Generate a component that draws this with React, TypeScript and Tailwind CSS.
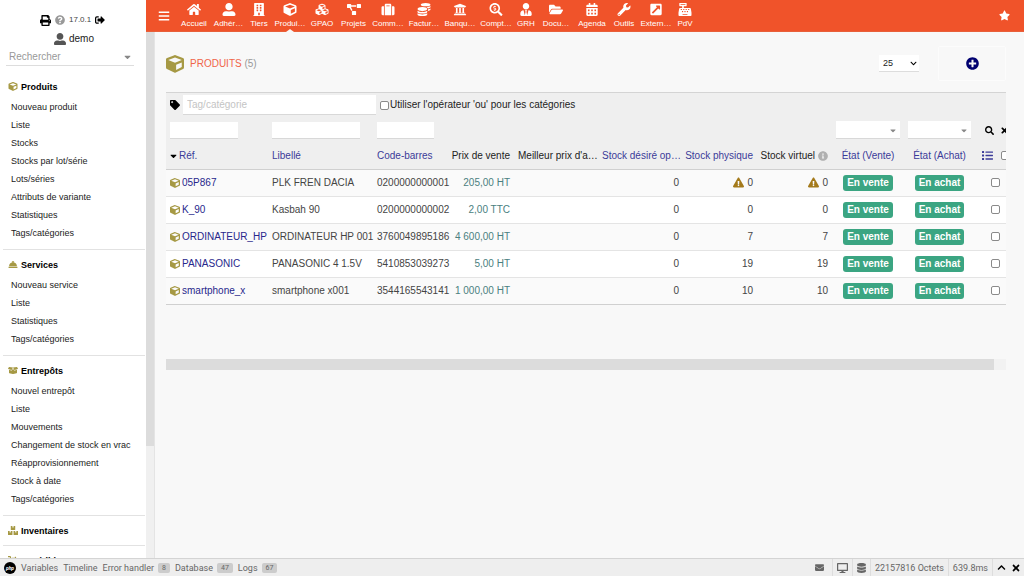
import React, { useState } from 'react';
import type { IconType } from 'react-icons';
import {
  FaBars,
  FaBoxes,
  FaBoxOpen,
  FaBuilding,
  FaCalendarAlt,
  FaCaretDown,
  FaCashRegister,
  FaChevronDown,
  FaChevronUp,
  FaCoins,
  FaConciergeBell,
  FaCube,
  FaCubes,
  FaDatabase,
  FaDesktop,
  FaDolly,
  FaEnvelope,
  FaExclamationTriangle,
  FaExternalLinkSquareAlt,
  FaFolderOpen,
  FaHome,
  FaInfoCircle,
  FaList,
  FaPlusCircle,
  FaPrint,
  FaProjectDiagram,
  FaQuestionCircle,
  FaSearch,
  FaSearchDollar,
  FaSignOutAlt,
  FaStar,
  FaSuitcase,
  FaTag,
  FaTimes,
  FaUniversity,
  FaUserAlt,
  FaUserTie,
  FaWrench,
} from 'react-icons/fa';

interface MenuEntry {
  label: string;
  icon: IconType;
  width: string;
  active?: boolean;
}

interface MenuSection {
  title: string;
  icon: IconType;
  items: string[];
}

interface Product {
  ref: string;
  label: string;
  barcode: string;
  price: string;
  desired: number;
  stock: number;
  warning?: boolean;
}

const topMenu: MenuEntry[] = [
  { label: 'Accueil', icon: FaHome, width: 'w-[36px]' },
  { label: 'Adhér…', icon: FaUserAlt, width: 'w-[33px]' },
  { label: 'Tiers', icon: FaBuilding, width: 'w-[28px]' },
  { label: 'Produi…', icon: FaCube, width: 'w-[34px]', active: true },
  { label: 'GPAO', icon: FaCubes, width: 'w-[30px]' },
  { label: 'Projets', icon: FaProjectDiagram, width: 'w-[33px]' },
  { label: 'Comm…', icon: FaSuitcase, width: 'w-[36px]' },
  { label: 'Factur…', icon: FaCoins, width: 'w-[36px]' },
  { label: 'Banqu…', icon: FaUniversity, width: 'w-[36px]' },
  { label: 'Compt…', icon: FaSearchDollar, width: 'w-[36px]' },
  { label: 'GRH', icon: FaUserTie, width: 'w-[24px]' },
  { label: 'Docu…', icon: FaFolderOpen, width: 'w-[36px]' },
  { label: 'Agenda', icon: FaCalendarAlt, width: 'w-[36px]' },
  { label: 'Outils', icon: FaWrench, width: 'w-[28px]' },
  { label: 'Extern…', icon: FaExternalLinkSquareAlt, width: 'w-[36px]' },
  { label: 'PdV', icon: FaCashRegister, width: 'w-[22px]' },
];

const sections: MenuSection[] = [
  {
    title: 'Produits',
    icon: FaCube,
    items: [
      'Nouveau produit',
      'Liste',
      'Stocks',
      'Stocks par lot/série',
      'Lots/séries',
      'Attributs de variante',
      'Statistiques',
      'Tags/catégories',
    ],
  },
  {
    title: 'Services',
    icon: FaConciergeBell,
    items: ['Nouveau service', 'Liste', 'Statistiques', 'Tags/catégories'],
  },
  {
    title: 'Entrepôts',
    icon: FaBoxOpen,
    items: [
      'Nouvel entrepôt',
      'Liste',
      'Mouvements',
      'Changement de stock en vrac',
      'Réapprovisionnement',
      'Stock à date',
      'Tags/catégories',
    ],
  },
  { title: 'Inventaires', icon: FaBoxes, items: [] },
  { title: 'Expéditions', icon: FaDolly, items: [] },
];

const products: Product[] = [
  { ref: '05P867', label: 'PLK FREN DACIA', barcode: '0200000000001', price: '205,00 HT', desired: 0, stock: 0, warning: true },
  { ref: 'K_90', label: 'Kasbah 90', barcode: '0200000000002', price: '2,00 TTC', desired: 0, stock: 0 },
  { ref: 'ORDINATEUR_HP', label: 'ORDINATEUR HP 001', barcode: '3760049895186', price: '4 600,00 HT', desired: 0, stock: 7 },
  { ref: 'PANASONIC', label: 'PANASONIC 4 1.5V', barcode: '5410853039273', price: '5,00 HT', desired: 0, stock: 19 },
  { ref: 'smartphone_x', label: 'smartphone x001', barcode: '3544165543141', price: '1 000,00 HT', desired: 0, stock: 10 },
];

const checkboxClass =
  'block h-[9px] w-[9px] shrink-0 appearance-none rounded-[2px] border border-[#8a8a8a] bg-white checked:bg-[#0075ff]';
const filterClass = 'block h-[17px] border-b border-[#d8d8d8] bg-white px-1 focus:outline-none';

const TopBar: React.FC = () => (
  <header className="flex h-8 shrink-0 items-stretch border-b border-[#e8603a] bg-[#f0532a] text-white">
    <button type="button" aria-label="Menu" className="flex w-[30px] items-center justify-center pl-[6px]">
      <FaBars className="h-3 w-3" />
    </button>
    <nav className="flex flex-1">
      {topMenu.map(({ label, icon: Icon, width, active }) => (
        <a
          key={label}
          href="#"
          className={`relative flex shrink-0 flex-col items-center gap-px pt-[3px] text-[8px] leading-[14px] whitespace-nowrap ${width}`}
        >
          <Icon className="h-[13px] w-[14px] shrink-0" />
          <span>{label}</span>
          {active && (
            <span className="absolute -bottom-px border-x-4 border-b-[3px] border-x-transparent border-b-[#f8f8f8]" />
          )}
        </a>
      ))}
    </nav>
    <button type="button" aria-label="Favoris" className="flex w-10 items-center justify-center">
      <FaStar className="h-[11px] w-[11px]" />
    </button>
  </header>
);

const Sidebar: React.FC = () => (
  <aside className="flex w-[155px] shrink-0 overflow-hidden border-r border-[#e4e4e4] bg-white">
    <div className="min-w-0 flex-1">
      <div className="flex h-[72px] flex-col pt-[11px]">
        <div className="flex h-[18px] items-center gap-1 pl-10 text-[8px] text-[#444]">
          <button type="button" aria-label="Imprimer"><FaPrint className="h-[11px] w-[11px] text-black" /></button>
          <button type="button" aria-label="Aide"><FaQuestionCircle className="h-[10px] w-[10px] text-[#999]" /></button>
          <span>17.0.1</span>
          <button type="button" aria-label="Déconnexion"><FaSignOutAlt className="h-[10px] w-[10px] text-black" /></button>
        </div>
        <a href="#" className="flex h-5 items-center gap-[3px] pl-[54px] text-[10px] text-[#222]">
          <FaUserAlt className="h-3 w-3 text-[#555]" />
          demo
        </a>
        <div className="relative mr-3 ml-[6px]">
          <select
            aria-label="Rechercher"
            className="h-[17px] w-full appearance-none border-b border-[#ddd] bg-transparent pb-px pl-[3px] text-[10px] text-[#999] focus:outline-none"
          >
            <option>Rechercher</option>
          </select>
          <FaCaretDown className="pointer-events-none absolute top-[3px] right-[3px] h-[10px] w-[7px] text-[#888]" />
        </div>
      </div>

      {sections.map(({ title, icon: Icon, items }) => (
        <section key={title} className="mr-px ml-[3px] border-b border-[#e2e2e2] pb-[3px]">
          <h2 className="flex h-[26px] items-center gap-[3px] pt-[3px] pl-[5px] text-[9px] font-bold text-black">
            <Icon className="h-[9px] w-[10px] text-[#a69944]" />
            {title}
          </h2>
          {items.length > 0 && (
            <ul className="pb-1 pl-2 text-[9px] leading-[18px] text-[#222]">
              {items.map((item) => (
                <li key={item}>
                  <a href="#">{item}</a>
                </li>
              ))}
            </ul>
          )}
        </section>
      ))}
    </div>
    {/* Scroll track */}
    <div className="w-2 bg-[#f0f0f0]">
      <div className="h-4/5 bg-[#dcdcdc]" />
    </div>
  </aside>
);

const StatusFilter: React.FC<{ label: string }> = ({ label }) => (
  <div className="relative">
    <select aria-label={label} className="block h-[18px] w-full appearance-none border-b border-[#d8d8d8] bg-white focus:outline-none">
      <option></option>
    </select>
    <FaCaretDown className="pointer-events-none absolute top-[5px] right-1 h-[9px] w-[6px] text-[#888]" />
  </div>
);

const StockValue: React.FC<{ product: Product }> = ({ product }) => (
  <span className="flex items-center justify-end gap-[3px]">
    {product.warning && <FaExclamationTriangle className="h-[11px] w-[11px] text-[#a47a1b]" />}
    {product.stock}
  </span>
);

const Badge: React.FC<{ children: React.ReactNode }> = ({ children }) => (
  <span className="inline-block h-4 rounded-[3px] bg-[#3ba582] px-1 align-middle text-[10px] leading-4 font-bold text-white">
    {children}
  </span>
);

const ProductTable: React.FC = () => {
  const [selected, setSelected] = useState<string[]>([]);

  const toggle = (ref: string) => {
    setSelected((prev) => (prev.includes(ref) ? prev.filter((r) => r !== ref) : [...prev, ref]));
  };

  return (
    <div className="overflow-hidden">
      <div className="flex h-[25px] items-center border-t border-[#d4d4d4] bg-[#efefef] pl-1">
        <FaTag className="mr-[3px] h-[10px] w-[10px] text-black" />
        <input
          type="text"
          aria-label="Tag/catégorie"
          placeholder="Tag/catégorie"
          className="h-5 w-[193px] border-b border-[#d8d8d8] bg-white px-1 placeholder:text-[#c4c4c4] focus:outline-none"
        />
        <input type="checkbox" id="use-or" className={`ml-1 ${checkboxClass}`} />
        <label htmlFor="use-or" className="ml-px text-[#222]">Utiliser l'opérateur 'ou' pour les catégories</label>
      </div>

      <table className="w-full min-w-[851px] table-fixed border-collapse whitespace-nowrap">
        <colgroup>
          <col className="w-[102px]" />
          <col className="w-[105px]" />
          <col className="w-[77px]" />
          <col className="w-[64px]" />
          <col className="w-[84px]" />
          <col className="w-[85px]" />
          <col className="w-[74px]" />
          <col className="w-[75px]" />
          <col className="w-[72px]" />
          <col className="w-[71px]" />
          <col className="w-[42px]" />
        </colgroup>
        <thead className="bg-[#efefef] text-left text-[#222] [&_td]:px-1 [&_td]:py-0 [&_th]:px-1 [&_th]:py-0 [&_th]:font-normal">
          <tr className="h-[26px]">
            <td><input type="text" aria-label="Réf." className={`w-[68px] ${filterClass}`} /></td>
            <td><input type="text" aria-label="Libellé" className={`w-[88px] ${filterClass}`} /></td>
            <td><input type="text" aria-label="Code-barres" className={`w-[57px] ${filterClass}`} /></td>
            <td colSpan={5}></td>
            <td><StatusFilter label="État (Vente)" /></td>
            <td><StatusFilter label="État (Achat)" /></td>
            <td>
              <div className="flex items-center gap-[6px] pl-[6px] text-black">
                <button type="button" aria-label="Chercher"><FaSearch className="h-[9px] w-[9px]" /></button>
                <button type="button" aria-label="Effacer"><FaTimes className="h-[9px] w-[9px]" /></button>
              </div>
            </td>
          </tr>
          <tr className="h-[26px] border-b border-[#d0d0d0]">
            <th>
              <a href="#" className="flex items-center gap-[2px] text-[#3b3b99]">
                <FaCaretDown className="h-[10px] w-[7px] text-black" />
                Réf.
              </a>
            </th>
            <th><a href="#" className="text-[#3b3b99]">Libellé</a></th>
            <th><a href="#" className="text-[#3b3b99]">Code-barres</a></th>
            <th><span className="float-right">Prix de vente</span></th>
            <th>Meilleur prix d'a…</th>
            <th><a href="#" className="text-[#3b3b99]">Stock désiré op…</a></th>
            <th><a href="#" className="float-right text-[#3b3b99]">Stock physique</a></th>
            <th>
              <span className="flex items-center justify-end gap-[3px]">
                Stock virtuel
                <FaInfoCircle className="h-[10px] w-[10px] shrink-0 text-[#b0b0b0]" />
              </span>
            </th>
            <th className="text-center"><a href="#" className="text-[#3b3b99]">État (Vente)</a></th>
            <th className="text-center"><a href="#" className="text-[#3b3b99]">État (Achat)</a></th>
            <th>
              <div className="flex items-center gap-2 pl-[3px]">
                <FaList className="h-[11px] w-[11px] shrink-0 text-[#3b3b99]" />
                <input
                  type="checkbox"
                  aria-label="Tout sélectionner"
                  checked={selected.length === products.length}
                  onChange={(e) => setSelected(e.target.checked ? products.map((p) => p.ref) : [])}
                  className={checkboxClass}
                />
              </div>
            </th>
          </tr>
        </thead>
        <tbody className="text-[#444]">
          {products.map((product) => (
            <tr
              key={product.ref}
              className="h-[27px] border-b border-[#e4e4e4] bg-white odd:bg-[#fafafa] last:border-[#d0d0d0] [&_td]:px-1 [&_td]:py-0"
            >
              <td>
                <a href="#" className="flex items-center gap-[2px] text-[#27278c]">
                  <FaCube className="h-[10px] w-[10px] shrink-0 text-[#a69944]" />
                  {product.ref}
                </a>
              </td>
              <td>{product.label}</td>
              <td>{product.barcode}</td>
              <td className="text-right text-[#4a8080]">{product.price}</td>
              <td></td>
              <td className="text-right">{product.desired}</td>
              <td><StockValue product={product} /></td>
              <td><StockValue product={product} /></td>
              <td className="text-center"><Badge>En vente</Badge></td>
              <td className="text-center"><Badge>En achat</Badge></td>
              <td>
                <input
                  type="checkbox"
                  aria-label={`Sélectionner ${product.ref}`}
                  checked={selected.includes(product.ref)}
                  onChange={() => toggle(product.ref)}
                  className={`ml-3 ${checkboxClass}`}
                />
              </td>
            </tr>
          ))}
        </tbody>
      </table>

      {/* Horizontal scroll track */}
      <div className="mt-[54px] h-[11px] bg-[#f2f2f2]">
        <div className="mr-3 h-full bg-[#dcdcdc]" />
      </div>
    </div>
  );
};

const DebugBar: React.FC = () => {
  const tabs = [
    { label: 'Variables' },
    { label: 'Timeline' },
    { label: 'Error handler', count: 8 },
    { label: 'Database', count: 47 },
    { label: 'Logs', count: 67 },
  ];

  return (
    <footer className="flex h-[18px] shrink-0 items-center justify-between border-t border-[#d4d4d4] bg-[#eee] font-[Roboto,sans-serif] text-[9px] text-[#666]">
      <div className="flex items-center gap-[5px] pl-1">
        <span className="flex h-3 w-3 items-center justify-center rounded-full bg-black text-[5px] font-bold text-white italic">
          php
        </span>
        {tabs.map((tab) => (
          <a key={tab.label} href="#" className="flex items-center gap-1">
            {tab.label}
            {tab.count && (
              <span className="rounded-[2px] bg-[#ccc] px-1 text-[7px] leading-[10px] text-[#666]">{tab.count}</span>
            )}
          </a>
        ))}
      </div>
      <div className="flex h-full items-center divide-x divide-[#ddd] [&>*]:flex [&>*]:h-full [&>*]:items-center [&>*]:px-1">
        <span><FaEnvelope className="mr-1 h-[9px] w-[9px]" /></span>
        <span><FaDesktop className="h-[10px] w-[11px]" /></span>
        <span><FaDatabase className="h-[10px] w-[9px]" /></span>
        <span>22157816 Octets</span>
        <span>639.8ms</span>
        <span className="gap-[6px] text-black">
          <button type="button" aria-label="Ouvrir"><FaChevronUp className="h-[9px] w-[9px]" /></button>
          <button type="button" aria-label="Fermer"><FaTimes className="h-[10px] w-2" /></button>
        </span>
      </div>
    </footer>
  );
};

export default function App() {
  return (
    <div className="flex h-screen flex-col overflow-hidden bg-[#f8f8f8] font-['Liberation_Sans',Arial,sans-serif] text-[10px] leading-[14px]">
      <div className="flex min-h-0 flex-1">
        <Sidebar />
        <div className="-ml-[9px] flex min-w-0 flex-1 flex-col">
          <TopBar />
          <main className="min-h-0 flex-1 overflow-hidden pt-[14px] pr-[18px] pl-5">
            <div className="mb-[11px] flex h-[35px] items-center justify-between">
              <h1 className="flex items-center gap-[6px] text-[10px] text-[#999]">
                <FaCube className="h-[18px] w-[18px] text-[#a69944]" />
                <span><span className="text-[#f0654a]">PRODUITS</span> (5)</span>
              </h1>
              <div className="flex items-center gap-[19px]">
                <div className="relative">
                  <select
                    aria-label="Lignes par page"
                    className="block h-[17px] w-10 appearance-none border-b border-[#ddd] bg-white pl-1 text-[9px] text-[#222] focus:outline-none"
                  >
                    <option>25</option>
                    <option>50</option>
                    <option>100</option>
                  </select>
                  <FaChevronDown className="pointer-events-none absolute top-[5px] right-[2px] h-[7px] w-[7px] text-black" />
                </div>
                <a href="#" aria-label="Nouveau produit" className="flex h-[35px] w-[68px] items-center justify-center rounded-[2px] border border-[#fcfcfc]">
                  <FaPlusCircle className="h-[13px] w-[13px] text-[#000070]" />
                </a>
              </div>
            </div>
            <ProductTable />
          </main>
        </div>
      </div>
      <DebugBar />
    </div>
  );
}
